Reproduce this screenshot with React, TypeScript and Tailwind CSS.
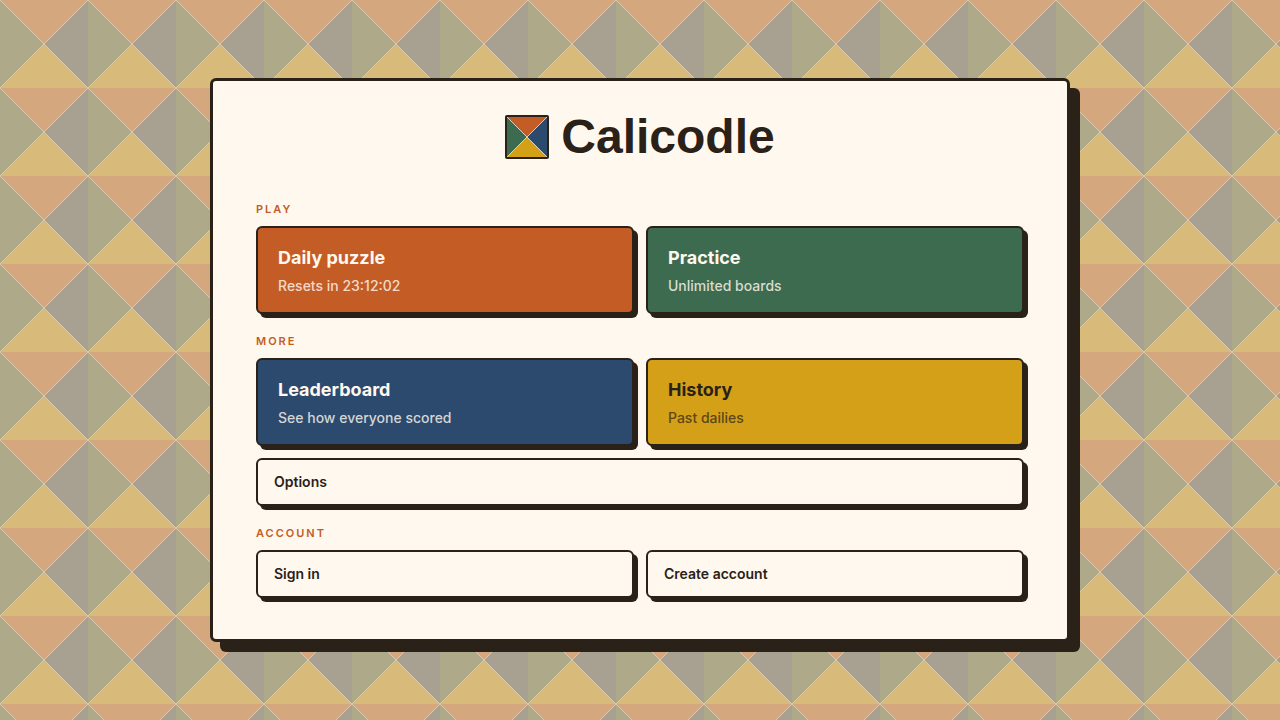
import type { ReactNode } from "react";

const TILE = 88;

type Tone = "orange" | "green" | "blue" | "gold";

const toneClasses: Record<Tone, string> = {
  orange: "bg-[#c45c26] text-[#fff8ee]",
  green: "bg-[#3d6b4f] text-[#fff8ee]",
  blue: "bg-[#2c4a6e] text-[#fff8ee]",
  gold: "bg-[#d4a017] text-[#2a2118]",
};

const detailClasses: Record<Tone, string> = {
  orange: "text-[#f3d9c6]",
  green: "text-[#d8dcce]",
  blue: "text-[#d5d5d4]",
  gold: "text-[#5d4718]",
};

function QuiltBackground() {
  return (
    <svg className="absolute inset-0 h-full w-full" aria-hidden="true">
      <defs>
        <pattern id="quilt" width={TILE} height={TILE} patternUnits="userSpaceOnUse">
          <polygon points="0,0 88,0 44,44" fill="#d5a77e" />
          <polygon points="88,0 88,88 44,44" fill="#a8a091" />
          <polygon points="88,88 0,88 44,44" fill="#d8ba7a" />
          <polygon points="0,88 0,0 44,44" fill="#aeaa89" />
          <path d="M0 0L88 88M88 0L0 88" stroke="#d9c9ae" strokeWidth="1" />
        </pattern>
      </defs>
      <rect width="100%" height="100%" fill="url(#quilt)" />
    </svg>
  );
}

function Logo() {
  return (
    <svg className="size-11 shrink-0" viewBox="0 0 44 44" aria-hidden="true">
      <rect width="44" height="44" rx="2" fill="#2a2118" />
      <polygon points="2,2 42,2 22,22" fill="#c45c26" />
      <polygon points="42,2 42,42 22,22" fill="#2c4a6e" />
      <polygon points="42,42 2,42 22,22" fill="#d4a017" />
      <polygon points="2,42 2,2 22,22" fill="#3d6b4f" />
      <path d="M2 2L42 42M42 2L2 42" stroke="#d8d0c0" strokeWidth="1" />
    </svg>
  );
}

function Section({ title, children }: { title: string; children: ReactNode }) {
  return (
    <section className="flex flex-col gap-2">
      <h2 className="text-[11px] leading-[17px] font-semibold tracking-[2px] text-[#c45c26] uppercase">
        {title}
      </h2>
      <div className="grid grid-cols-1 gap-3 sm:grid-cols-2">{children}</div>
    </section>
  );
}

function FeatureButton({ title, detail, tone }: { title: string; detail: string; tone: Tone }) {
  return (
    <button
      type="button"
      className={`flex cursor-pointer flex-col gap-1 rounded-md border-2 border-[#2a2118] px-5 py-4 text-left shadow-[4px_4px_0_#2a2118] ${toneClasses[tone]}`}
    >
      <span className="text-lg leading-7 font-bold">{title}</span>
      <span className={`text-sm leading-5 font-medium ${detailClasses[tone]}`}>{detail}</span>
    </button>
  );
}

function PlainButton({ label, wide = false }: { label: string; wide?: boolean }) {
  return (
    <button
      type="button"
      className={`cursor-pointer rounded-md border-2 border-[#2a2118] bg-[#fff8ee] px-4 py-3 text-left text-sm leading-5 font-semibold shadow-[4px_4px_0_#2a2118] ${wide ? "sm:col-span-2" : ""}`}
    >
      {label}
    </button>
  );
}

export default function App() {
  return (
    <div className="relative flex min-h-screen items-center justify-center p-6 font-['Inter','Liberation_Sans',sans-serif] text-[#2a2118]">
      <QuiltBackground />
      <main className="relative w-full max-w-[860px] rounded-md border-3 border-[#2a2118] bg-[#fff8ee] px-[43px] pt-8 pb-[41px] shadow-[10px_10px_0_#2a2118]">
        <header className="mb-10 flex items-center justify-center gap-3">
          <Logo />
          <h1 className="font-['Liberation_Sans',sans-serif] text-5xl leading-12 font-bold">Calicodle</h1>
        </header>
        <div className="flex flex-col gap-[19px]">
          <Section title="Play">
            <FeatureButton title="Daily puzzle" detail="Resets in 23:12:02" tone="orange" />
            <FeatureButton title="Practice" detail="Unlimited boards" tone="green" />
          </Section>
          <Section title="More">
            <FeatureButton title="Leaderboard" detail="See how everyone scored" tone="blue" />
            <FeatureButton title="History" detail="Past dailies" tone="gold" />
            <PlainButton label="Options" wide />
          </Section>
          <Section title="Account">
            <PlainButton label="Sign in" />
            <PlainButton label="Create account" />
          </Section>
        </div>
      </main>
    </div>
  );
}
